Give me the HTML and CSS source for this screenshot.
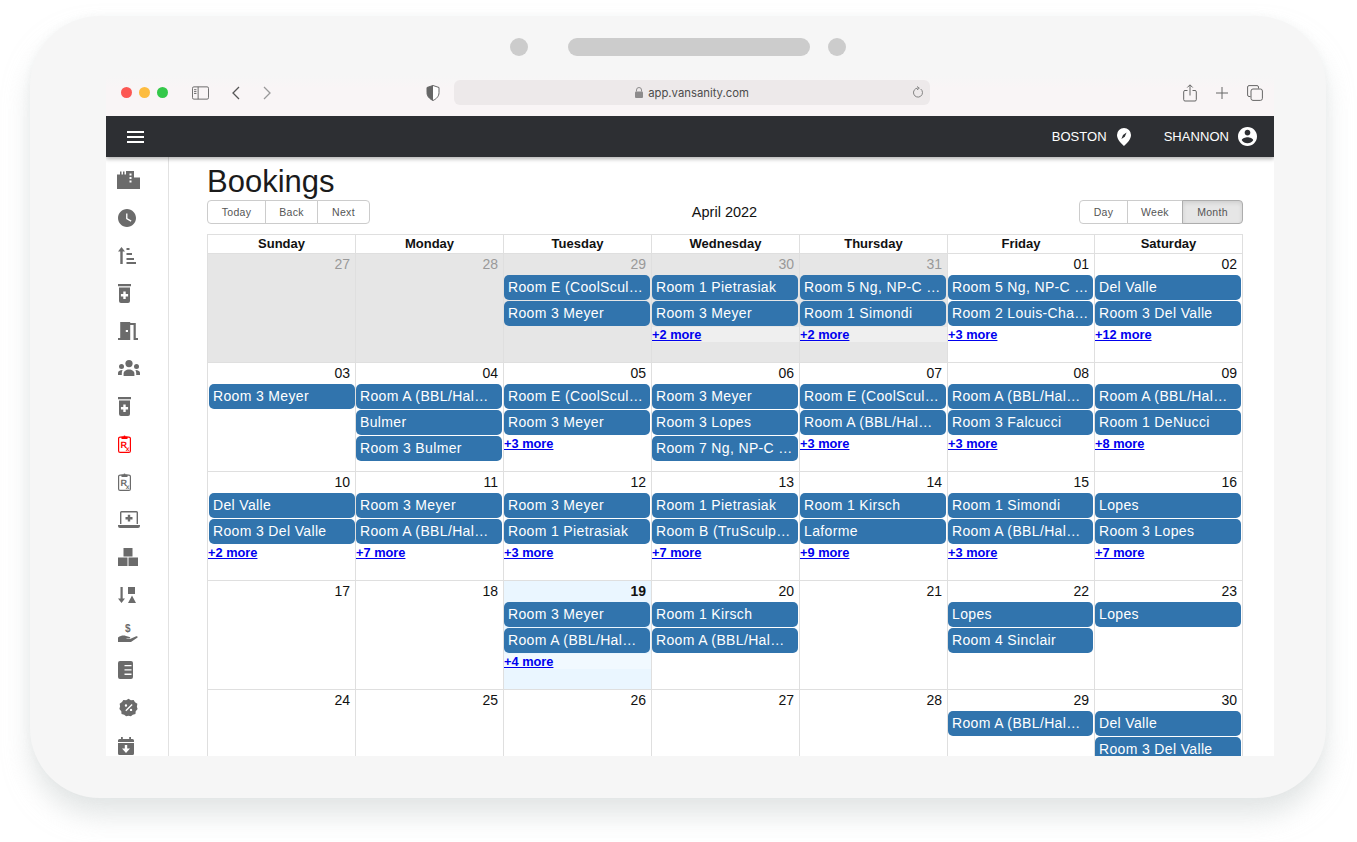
FILE: index.html
```html
<!DOCTYPE html>
<html lang="en">
<head>
  <meta charset="UTF-8" />
  <title>Bookings</title>
  <link rel="stylesheet" href="styles.css">
</head>
<body>

  <svg class="defs" width="0" height="0">
    <symbol id="i-bottle" viewBox="0 0 13 19">
      <path d="M0 0h13v2.2H0zM1 3.6h11V17a2 2 0 0 1-2 2H3a2 2 0 0 1-2-2zM5.300 7.500v2.500H2.900v2.400h2.400v2.500h2.400v-2.500h2.400V10H7.700V7.500z" fill-rule="evenodd"/>
    </symbol>
  </svg>

  <div class="device">
    <div class="speaker">
      <span class="dot"></span>
      <span class="pill"></span>
      <span class="dot"></span>
    </div>

    <div class="safari">
      <div class="lights">
        <span class="light red"></span>
        <span class="light amber"></span>
        <span class="light green"></span>
      </div>
      <svg class="bar-icon sidebar-toggle" viewBox="0 0 18 14"><rect x=".5" y=".5" width="17" height="13" rx="1.500"/><path d="M6.500.5v13M2.200 3.500h2.500M2.200 5.500h2.500M2.200 7.500h2.500"/></svg>
      <svg class="bar-icon back" viewBox="0 0 10 14"><path d="M8 1 2 7l6 6"/></svg>
      <svg class="bar-icon forward" viewBox="0 0 10 14"><path d="m2 1 6 6-6 6"/></svg>
      <svg class="shield" viewBox="0 0 14 16"><path d="M7 .5 13 2.500v5.200c0 3.600-2.600 6.200-6 7.800-3.400-1.600-6-4.200-6-7.800V2.500z" fill="#fff" stroke="#666"/><path d="M7 .5v15c-3.400-1.600-6-4.200-6-7.800V2.500z" fill="#666"/></svg>
      <div class="url">
        <svg class="lock" viewBox="0 0 8 11"><path d="M1.500 4.500V3a2.500 2.500 0 0 1 5 0v1.500" fill="none" stroke="#8d8b8c"/><rect y="4.500" width="8" height="6.500" rx="1" fill="#8d8b8c"/></svg>
        <span>app.vansanity.com</span>
        <svg class="reload" viewBox="0 0 12 13"><path d="M8.700 3a4.500 4.500 0 1 1-3-.9" fill="none" stroke="#777" stroke-width=".9"/><path d="m5 .5 2.300 1.700L5 3.800" fill="none" stroke="#777" stroke-width=".9"/></svg>
      </div>
      <div class="bar-right">
        <svg class="bar-icon share" viewBox="0 0 14 18"><path d="M4.500 6.500H2a1.300 1.300 0 0 0-1.300 1.300v7.900A1.300 1.300 0 0 0 2 17h10a1.300 1.300 0 0 0 1.300-1.300V7.800A1.300 1.300 0 0 0 12 6.500H9.500M7 11.500V1M4.300 3.500 7 .8l2.700 2.700"/></svg>
        <svg class="bar-icon plus" viewBox="0 0 12 12"><path d="M6 0v12M0 6h12"/></svg>
        <svg class="bar-icon tabs" viewBox="0 0 16 16"><path d="M3.500 11.500H2A1.500 1.500 0 0 1 .6 10V2A1.500 1.500 0 0 1 2 .6h8A1.500 1.500 0 0 1 11.500 2v1.500"/><rect x="4" y="4" width="11.400" height="11.400" rx="2"/></svg>
      </div>
    </div>

    <div class="screen">
      <header class="topbar">
        <svg class="menu" viewBox="0 0 17 12"><path d="M0 0h17v2H0zM0 5h17v2H0zM0 10h17v2H0z"/></svg>
        <div class="topbar-right">
          <span>BOSTON</span>
          <svg class="pin" viewBox="0 0 14 18"><path d="M7 0a7 7 0 0 1 7 7c0 4-3.500 8-7 11C3.500 15 0 11 0 7a7 7 0 0 1 7-7zm2.600 4.600L6 7l-1.600 4 3.400-2.300z" fill-rule="evenodd"/></svg>
          <span class="user-name">SHANNON</span>
          <svg class="avatar" viewBox="2 2 20 20"><path d="M12 2C6.480 2 2 6.480 2 12s4.480 10 10 10 10-4.480 10-10S17.520 2 12 2zm0 3c1.660 0 3 1.340 3 3s-1.340 3-3 3-3-1.340-3-3 1.340-3 3-3zm0 14.200c-2.500 0-4.710-1.280-6-3.220.03-1.990 4-3.080 6-3.080 1.990 0 5.970 1.090 6 3.080-1.290 1.940-3.500 3.220-6 3.220z"/></svg>
        </div>
      </header>

      <div class="app">
        <nav class="sidenav">
          <div class="nav-item"><svg class="ico-factory" viewBox="0 0 23 18"><path d="M0 3.500h3v-3h1.500v3H6v-3h1.500v3H9V0h8v6.500h6V18H0zM12.500 2.500v2h2v-2zm0 3.500v2h2V6zm0 3.500v2h2v-2z" fill-rule="evenodd"/></svg></div>
          <div class="nav-item"><svg class="ico-clock" viewBox="2 2 20 20"><path d="M12 2C6.500 2 2 6.500 2 12s4.500 10 10 10 10-4.500 10-10S17.500 2 12 2zm4.200 14.200L11 13V7h1.500v5.200l4.500 2.700-.8 1.300z"/></svg></div>
          <div class="nav-item"><svg class="ico-sort" viewBox="0 0 18 17"><path d="M3.500 0 7 4.500H4.700V17H2.300V4.500H0zM8.500 1h3v2h-3zM8.500 6H14v2H8.500zM8.500 11H16v2H8.500zM8.500 15H18v2H8.500z"/></svg></div>
          <div class="nav-item"><svg class="ico-bottle"><use href="#i-bottle"/></svg></div>
          <div class="nav-item"><svg class="ico-door" viewBox="3 3 18 18" preserveAspectRatio="none"><path d="M14 6v15H3v-2h2V3h9v1h5v15h2v2h-4V6h-3zm-4 5v2h2v-2h-2z"/></svg></div>
          <div class="nav-item"><svg class="ico-groups" viewBox="0 0 22 16"><circle cx="11" cy="3.600" r="3.600"/><path d="M5.600 16v-2.400c0-2 2.400-4 5.400-4s5.400 2 5.400 4V16z"/><circle cx="3.500" cy="6.500" r="2.500"/><circle cx="18.500" cy="6.500" r="2.500"/><path d="M0 15v-2c0-1.500 1.600-2.800 4.600-2.900-.5.9-.8 1.900-.8 3V15zM22 15v-2c0-1.500-1.600-2.800-4.600-2.900.5.9.8 1.900.8 3V15z"/></svg></div>
          <div class="nav-item"><svg class="ico-bottle"><use href="#i-bottle"/></svg></div>
          <div class="nav-item active"><svg class="ico-rx" viewBox="0 0 13 18"><rect x=".6" y="2.100" width="11.800" height="15.300" rx="1.500" fill="none" stroke="currentColor" stroke-width="1.200"/><path d="M3.500 1.500h2a1 1 0 0 1 2 0h2v2.500h-6z"/><text x="2.600" y="12.600" class="rx-r">R</text><text x="7.800" y="15.800" class="rx-x">x</text></svg></div>
          <div class="nav-item"><svg class="ico-rx" viewBox="0 0 13 18"><rect x=".6" y="2.100" width="11.800" height="15.300" rx="1.500" fill="none" stroke="currentColor" stroke-width="1.200"/><path d="M3.500 1.500h2a1 1 0 0 1 2 0h2v2.500h-6z"/><text x="2.600" y="12.600" class="rx-r">R</text><text x="7.800" y="15.800" class="rx-x">x</text></svg></div>
          <div class="nav-item"><svg class="ico-laptop" viewBox="0 0 22 17"><path d="M3.500 0h15A1.500 1.500 0 0 1 20 1.500V13h-1.400V1.500a.1.100 0 0 0-.1-.1h-15a.1.100 0 0 0-.1.1V13H2V1.500A1.500 1.500 0 0 1 3.500 0zM0 14h22v1a2 2 0 0 1-2 2H2a2 2 0 0 1-2-2zM9.800 3.800h2.400V6H14.500v2.400h-2.300v2.200H9.800V8.400H7.500V6h2.300z"/></svg></div>
          <div class="nav-item"><svg class="ico-blocks" viewBox="0 0 20 18"><path d="M5.500 0h9v8.500h-9zM0 9.500h9.500V18H0zM10.500 9.500H20V18h-9.500z"/></svg></div>
          <div class="nav-item"><svg class="ico-shapes" viewBox="0 0 18 16"><path d="M2.500 0h2.200v11.500H7L3.500 16 0 11.500h2.500zM10 0h7v7h-7zM14 8.500l4 7.500h-8z"/></svg></div>
          <div class="nav-item"><svg class="ico-hand" viewBox="0 0 20 20"><text x="7" y="9.500" class="dollar">$</text><path d="M0 15.500C3 13.500 5.500 13 8 14l3.500 1c1 .3 1 1.300 0 1.500H8.500v.6H12l6.200-2.800c1.300-.5 2 .8 1 1.500L13 20H0z"/></svg></div>
          <div class="nav-item"><svg class="ico-list" viewBox="0 0 15 18"><path d="M2 0h11a2 2 0 0 1 2 2v14a2 2 0 0 1-2 2H2a2 2 0 0 1-2-2V2a2 2 0 0 1 2-2zm4.500 4v1.300h7V4zm0 4.300v1.300h7V8.300zm0 4.300v1.300h7v-1.300z" fill-rule="evenodd"/></svg></div>
          <div class="nav-item"><svg class="ico-badge" viewBox="0 0 24 24"><path d="M12 1l3 1.800 3.500-.3 1.700 3 3 1.900-.6 3.600.9 3-2.400 2.600-.3 3.500-3.400 1L15 23l-3-.5-3 .5-2.400-1.900-3.400-1-.3-3.500L.5 14l.9-3.600-.6-3.200 3-2.200 1.700-2.500 3.500.3zM8.800 8a1.500 1.500 0 1 0 0 3 1.500 1.500 0 0 0 0-3zm6.400 5.500a1.500 1.500 0 1 0 0 3 1.500 1.500 0 0 0 0-3zm.8-5.900-8 8 1.200 1.200 8-8z" fill-rule="evenodd"/></svg></div>
          <div class="nav-item"><svg class="ico-cal" viewBox="0 0 16 18"><path d="M3 0h1.800v2h6.400V0H13v2h1.500A1.500 1.500 0 0 1 16 3.500V5H0V3.500A1.500 1.500 0 0 1 1.500 2H3zM0 6h16v10.500a1.500 1.500 0 0 1-1.500 1.500h-13A1.500 1.500 0 0 1 0 16.500zm6.800 2v3.500H4L8 16l4-4.500H9.200V8z" fill-rule="evenodd"/></svg></div>
        </nav>

        <main class="content">
          <h1>Bookings</h1>
          <div class="toolbar">
            <div class="btn-group">
              <button class="today">Today</button>
              <button class="prev">Back</button>
              <button class="next">Next</button>
            </div>
            <span class="toolbar-label">April 2022</span>
            <div class="btn-group">
              <button class="day">Day</button>
              <button class="week">Week</button>
              <button class="month on">Month</button>
            </div>
          </div>

          <div class="calendar">
            <div class="weekdays">
              <div>Sunday</div><div>Monday</div><div>Tuesday</div><div>Wednesday</div><div>Thursday</div><div>Friday</div><div>Saturday</div>
            </div>

            <div class="week-row">
              <div class="cell off"><div class="date">27</div></div>
              <div class="cell off"><div class="date">28</div></div>
              <div class="cell off"><div class="date">29</div>
                <div class="event">Room E (CoolScul…</div>
                <div class="event">Room 3 Meyer</div>
              </div>
              <div class="cell off"><div class="date">30</div>
                <div class="event">Room 1 Pietrasiak</div>
                <div class="event">Room 3 Meyer</div>
                <a class="more" href="#">+2 more</a>
              </div>
              <div class="cell off"><div class="date">31</div>
                <div class="event">Room 5 Ng, NP-C …</div>
                <div class="event">Room 1 Simondi</div>
                <a class="more" href="#">+2 more</a>
              </div>
              <div class="cell"><div class="date">01</div>
                <div class="event">Room 5 Ng, NP-C …</div>
                <div class="event">Room 2 Louis-Cha…</div>
                <a class="more" href="#">+3 more</a>
              </div>
              <div class="cell"><div class="date">02</div>
                <div class="event">Del Valle</div>
                <div class="event">Room 3 Del Valle</div>
                <a class="more" href="#">+12 more</a>
              </div>
            </div>

            <div class="week-row">
              <div class="cell"><div class="date">03</div>
                <div class="event">Room 3 Meyer</div>
              </div>
              <div class="cell"><div class="date">04</div>
                <div class="event">Room A (BBL/Hal…</div>
                <div class="event">Bulmer</div>
                <div class="event">Room 3 Bulmer</div>
              </div>
              <div class="cell"><div class="date">05</div>
                <div class="event">Room E (CoolScul…</div>
                <div class="event">Room 3 Meyer</div>
                <a class="more" href="#">+3 more</a>
              </div>
              <div class="cell"><div class="date">06</div>
                <div class="event">Room 3 Meyer</div>
                <div class="event">Room 3 Lopes</div>
                <div class="event">Room 7 Ng, NP-C …</div>
              </div>
              <div class="cell"><div class="date">07</div>
                <div class="event">Room E (CoolScul…</div>
                <div class="event">Room A (BBL/Hal…</div>
                <a class="more" href="#">+3 more</a>
              </div>
              <div class="cell"><div class="date">08</div>
                <div class="event">Room A (BBL/Hal…</div>
                <div class="event">Room 3 Falcucci</div>
                <a class="more" href="#">+3 more</a>
              </div>
              <div class="cell"><div class="date">09</div>
                <div class="event">Room A (BBL/Hal…</div>
                <div class="event">Room 1 DeNucci</div>
                <a class="more" href="#">+8 more</a>
              </div>
            </div>

            <div class="week-row">
              <div class="cell"><div class="date">10</div>
                <div class="event">Del Valle</div>
                <div class="event">Room 3 Del Valle</div>
                <a class="more" href="#">+2 more</a>
              </div>
              <div class="cell"><div class="date">11</div>
                <div class="event">Room 3 Meyer</div>
                <div class="event">Room A (BBL/Hal…</div>
                <a class="more" href="#">+7 more</a>
              </div>
              <div class="cell"><div class="date">12</div>
                <div class="event">Room 3 Meyer</div>
                <div class="event">Room 1 Pietrasiak</div>
                <a class="more" href="#">+3 more</a>
              </div>
              <div class="cell"><div class="date">13</div>
                <div class="event">Room 1 Pietrasiak</div>
                <div class="event">Room B (TruSculp…</div>
                <a class="more" href="#">+7 more</a>
              </div>
              <div class="cell"><div class="date">14</div>
                <div class="event">Room 1 Kirsch</div>
                <div class="event">Laforme</div>
                <a class="more" href="#">+9 more</a>
              </div>
              <div class="cell"><div class="date">15</div>
                <div class="event">Room 1 Simondi</div>
                <div class="event">Room A (BBL/Hal…</div>
                <a class="more" href="#">+3 more</a>
              </div>
              <div class="cell"><div class="date">16</div>
                <div class="event">Lopes</div>
                <div class="event">Room 3 Lopes</div>
                <a class="more" href="#">+7 more</a>
              </div>
            </div>

            <div class="week-row">
              <div class="cell"><div class="date">17</div></div>
              <div class="cell"><div class="date">18</div></div>
              <div class="cell today-cell"><div class="date">19</div>
                <div class="event">Room 3 Meyer</div>
                <div class="event">Room A (BBL/Hal…</div>
                <a class="more" href="#">+4 more</a>
              </div>
              <div class="cell"><div class="date">20</div>
                <div class="event">Room 1 Kirsch</div>
                <div class="event">Room A (BBL/Hal…</div>
              </div>
              <div class="cell"><div class="date">21</div></div>
              <div class="cell"><div class="date">22</div>
                <div class="event">Lopes</div>
                <div class="event">Room 4 Sinclair</div>
              </div>
              <div class="cell"><div class="date">23</div>
                <div class="event">Lopes</div>
              </div>
            </div>

            <div class="week-row">
              <div class="cell"><div class="date">24</div></div>
              <div class="cell"><div class="date">25</div></div>
              <div class="cell"><div class="date">26</div></div>
              <div class="cell"><div class="date">27</div></div>
              <div class="cell"><div class="date">28</div></div>
              <div class="cell"><div class="date">29</div>
                <div class="event">Room A (BBL/Hal…</div>
              </div>
              <div class="cell"><div class="date">30</div>
                <div class="event">Del Valle</div>
                <div class="event">Room 3 Del Valle</div>
              </div>
            </div>
          </div>
        </main>
      </div>
    </div>
  </div>

</body>
</html>
```

FILE: styles.css
```css
* {
  box-sizing: border-box;
}

body {
  margin: 0;
  height: 842px;
  overflow: hidden;
  background: #fff;
  font-family: "Liberation Sans", Arial, sans-serif;
  color: #111;
}

.defs {
  display: block;
  height: 0;
}

/* device frame */
.device {
  width: 1296px;
  height: 782px;
  margin: 16px 0 0 30px;
  padding: 22px 52px 0 76px;
  background: #f6f6f6;
  border-radius: 70px;
  box-shadow: 0 18px 26px rgba(205, 212, 212, 0.55), 0 0 8px rgba(215, 220, 220, 0.2);
}

.speaker {
  display: flex;
  align-items: center;
  height: 18px;
  margin-left: 404px;
}

.dot {
  width: 18px;
  height: 18px;
  border-radius: 50%;
  background: #ccc;
}

.pill {
  width: 242px;
  height: 18px;
  margin: 0 18px 0 40px;
  border-radius: 9px;
  background: #ccc;
}

/* safari bar */
.safari {
  display: flex;
  align-items: center;
  height: 40px;
  margin-top: 20px;
  padding: 0 0 7px 15px;
  background: linear-gradient(#f6f6f6, #f9f5f6 30%);
}

.lights {
  display: flex;
  gap: 7px;
}

.light {
  width: 11px;
  height: 11px;
  border-radius: 50%;
}

.red { background: #fc5753; }
.amber { background: #fdbc40; }
.green { background: #34c84a; }

.bar-icon {
  fill: none;
  stroke: #666;
  stroke-width: 1;
}

.sidebar-toggle {
  width: 17px;
  height: 14px;
  margin-left: 24px;
}

.back {
  width: 10px;
  height: 14px;
  margin-left: 22px;
  stroke: #555;
  stroke-width: 1.3;
}

.forward {
  width: 10px;
  height: 14px;
  margin-left: 21px;
  stroke: #999;
  stroke-width: 1.3;
}

.shield {
  width: 14px;
  height: 16px;
  margin-left: 154px;
}

.url {
  position: relative;
  display: flex;
  align-items: center;
  justify-content: center;
  gap: 5px;
  width: 476px;
  height: 25px;
  margin-left: 14px;
  border-radius: 6px;
  background: #ede9ea;
  color: #4c4c4c;
  font-family: Inter, "Liberation Sans", sans-serif;
  font-size: 11.3px;
}

.lock {
  width: 8px;
  height: 11px;
}

.reload {
  position: absolute;
  right: 6px;
  top: 6px;
  width: 12px;
  height: 13px;
}

.bar-right {
  display: flex;
  align-items: center;
  margin-left: 253px;
}

.share {
  width: 14px;
  height: 18px;
}

.plus {
  width: 12px;
  height: 12px;
  margin-left: 19px;
}

.tabs {
  width: 16px;
  height: 16px;
  margin-left: 19px;
}

/* app */
.screen {
  width: 1168px;
  height: 640px;
  overflow: hidden;
  background: #fff;
}

.topbar {
  position: relative;
  display: flex;
  align-items: center;
  justify-content: space-between;
  height: 41px;
  padding: 0 17px 0 21px;
  background: #2d2f33;
  box-shadow: 0 2px 4px rgba(0, 0, 0, 0.3);
  color: #fff;
  font-size: 13px;
  letter-spacing: 0.05px;
}

.menu {
  width: 17px;
  height: 12px;
  fill: #fff;
}

.topbar-right {
  display: flex;
  align-items: center;
}

.pin {
  width: 14px;
  height: 18px;
  margin-left: 10px;
  fill: #fff;
}

.user-name {
  margin-left: 33px;
}

.avatar {
  width: 19px;
  height: 19px;
  margin-left: 9px;
  fill: #fff;
}

.app {
  display: flex;
  height: 599px;
}

.sidenav {
  flex: none;
  width: 63px;
  height: 100%;
  padding: 4px 0 0 12px;
  border-right: 1px solid #e2e2e2;
  color: #6b6b6b;
  fill: currentColor;
}

.nav-item {
  display: flex;
  align-items: center;
  height: 37.73px;
}

.nav-item.active {
  color: #f00;
}

.nav-item svg {
  flex: none;
}

.ico-factory { width: 23px; height: 18px; margin-left: -1px; }
.ico-clock { width: 18px; height: 18px; }
.ico-sort { width: 18px; height: 17px; }
.ico-bottle { width: 13px; height: 19px; }
.ico-door { width: 20px; height: 18px; }
.ico-groups { width: 22px; height: 16px; }
.ico-rx { width: 13px; height: 18px; }
.ico-laptop { width: 22px; height: 17px; }
.ico-blocks { width: 20px; height: 18px; }
.ico-shapes { width: 18px; height: 16px; }
.ico-hand { width: 20px; height: 20px; }
.ico-list { width: 15px; height: 18px; }
.ico-badge { width: 19px; height: 19px; margin-left: 1px; }
.ico-cal { width: 16px; height: 18px; }

.rx-r {
  font: 700 9px "Liberation Sans", sans-serif;
  text-rendering: geometricPrecision;
}

.rx-x {
  font: 700 6.5px "Liberation Sans", sans-serif;
  text-rendering: geometricPrecision;
}

.dollar {
  font: 700 10px "Liberation Sans", sans-serif;
}

.content {
  flex: 1;
  padding: 5px 31px 0 38px;
}

h1 {
  margin: 0;
  height: 38px;
  font-size: 31px;
  font-weight: 400;
  line-height: 40px;
  color: #1b1b1b;
}

.toolbar {
  display: flex;
  align-items: center;
  justify-content: space-between;
  height: 24px;
  margin-bottom: 10px;
}

.toolbar-label {
  font-size: 14.5px;
}

.btn-group {
  display: flex;
}

button {
  height: 24px;
  padding: 0;
  border: 1px solid #ccc;
  background: #fff;
  color: #555;
  font: 10.5px "Liberation Sans", sans-serif;
  letter-spacing: 0.3px;
}

button + button {
  margin-left: -1px;
}

button:first-child {
  border-radius: 4px 0 0 4px;
}

button:last-child {
  border-radius: 0 4px 4px 0;
}

.today { width: 59px; }
.prev { width: 53px; }
.next { width: 53px; }
.day { width: 49px; }
.week { width: 56px; }
.month { width: 61px; }

button.on {
  background: #e6e6e6;
  border-color: #adadad;
  box-shadow: inset 0 2px 4px rgba(0, 0, 0, 0.1);
}

/* calendar */
.calendar {
  width: 1036px;
  border: 1px solid #dfdfdf;
  border-bottom: none;
}

.weekdays,
.week-row {
  display: grid;
  grid-template-columns: 147px 148px 148px 148px 148px 147px 148px;
  border-bottom: 1px solid #dfdfdf;
}

.weekdays {
  height: 19px;
  font-size: 13px;
  font-weight: 700;
  line-height: 17px;
  text-align: center;
}

.weekdays div + div {
  border-left: 1px solid #dfdfdf;
}

.week-row {
  height: 109px;
}

.cell {
  min-width: 0;
}

.cell + .cell {
  border-left: 1px solid #dfdfdf;
}

.cell.off {
  background: #e6e6e6;
}

.today-cell {
  background: #eaf6ff;
}

.date {
  height: 21px;
  padding-right: 5px;
  font-size: 14px;
  line-height: 21px;
  text-align: right;
}

.off .date {
  color: #999;
}

.today-cell .date {
  font-weight: 700;
}

.event {
  height: 25px;
  margin: 0 1px 1px 0;
  padding: 0 2px 0 4px;
  overflow: hidden;
  border-radius: 5px;
  background: #3174ad;
  color: #fff;
  font-size: 14px;
  letter-spacing: 0.35px;
  line-height: 24px;
  white-space: nowrap;
  text-overflow: ellipsis;
}

.cell:first-child .event {
  margin: 0 0 1px 1px;
}

.more {
  display: block;
  height: 15px;
  color: #00e;
  font-size: 12.8px;
  font-weight: 700;
  line-height: 15px;
}

.off .more,
.today-cell .more {
  background: rgba(255, 255, 255, 0.35);
}
```
